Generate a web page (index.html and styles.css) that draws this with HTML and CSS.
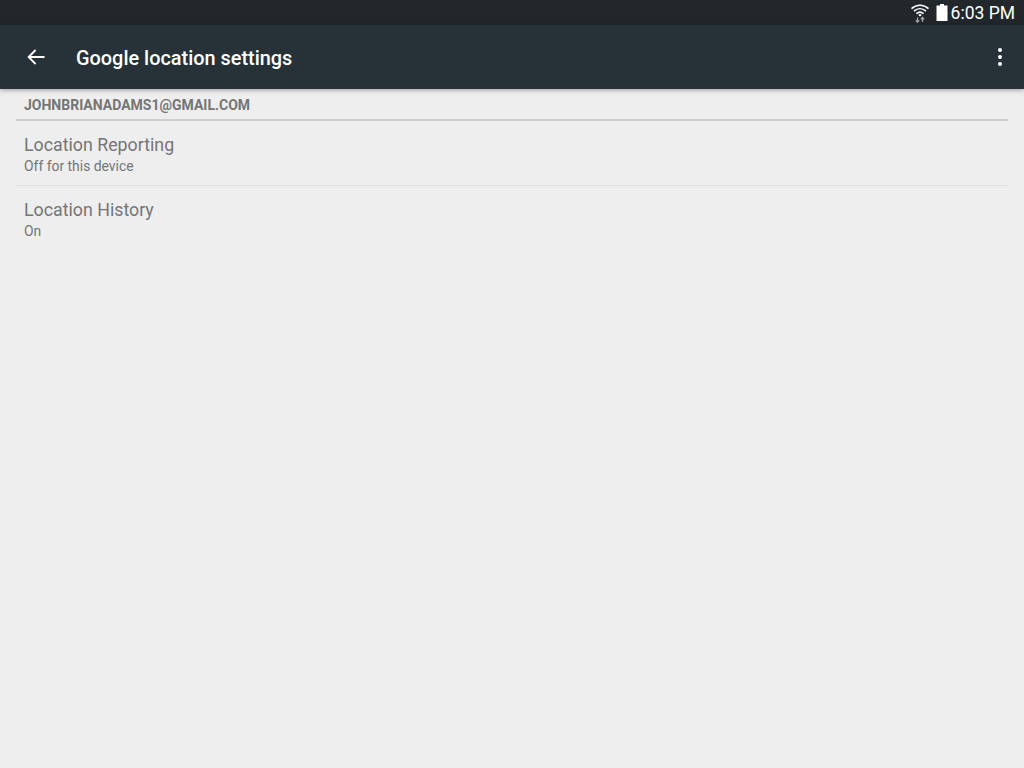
FILE: index.html
```
<!DOCTYPE html>
<html lang="en">
<head>
<meta charset="utf-8">
<title>Google location settings</title>
<link rel="stylesheet" href="styles.css">
</head>
<body>
<div class="status">
  <svg class="wifi" width="20" height="20" viewBox="0 0 20 20">
    <path d="M1.5 5.6C6.5 1.1 13.5 1.1 18.5 5.6M4 8.2C7.6 5 12.4 5 16 8.2M6.4 10.6C8.6 8.8 11.4 8.8 13.6 10.6" fill="none" stroke="#fff" stroke-width="1.6"/>
    <path d="M8.2 12L10 13.6L11.8 12L10 10.8Z" fill="#fff"/>
    <path d="M7.5 14.5V19M5.8 17.4L7.5 19.2L9.2 17.4M12.5 19V14.5M10.8 16.2L12.5 14.4L14.2 16.2" fill="none" stroke="#a4a8aa" stroke-width="1.3"/>
  </svg>
  <svg class="battery" width="12" height="17" viewBox="0 0 12 17"><path d="M4 0H8V1.5H11.5V17H.5V1.5H4Z" fill="#fff"/></svg>
  <span class="clock">6:03 PM</span>
</div>
<header class="appbar">
  <svg class="back" width="18" height="16" viewBox="0 0 18 16"><path d="M17.5 8H2M8.6 1L1.6 8L8.6 15" fill="none" stroke="#fff" stroke-width="1.8"/></svg>
  <h1 class="title">Google location settings</h1>
  <div class="more"><i></i><i></i><i></i></div>
</header>
<main class="content">
  <div class="section">JOHNBRIANADAMS1@GMAIL.COM</div>
  <div class="row row-first">
    <div class="row-title">Location Reporting</div>
    <div class="row-sub">Off for this device</div>
  </div>
  <div class="row">
    <div class="row-title">Location History</div>
    <div class="row-sub">On</div>
  </div>
</main>
</body>
</html>
```
FILE: styles.css
```
* { box-sizing: border-box; }
html, body { margin: 0; height: 100%; }
body {
  width: 1024px;
  height: 768px;
  overflow: hidden;
  display: flex;
  flex-direction: column;
  background: #eeeeee;
  font-family: Roboto, "Liberation Sans", sans-serif;
}
.status {
  height: 25px;
  flex: none;
  background: #21272b;
  color: #fff;
  display: flex;
  align-items: center;
  justify-content: flex-end;
  padding-right: 9px;
}
.wifi { margin-right: 6px; }
.battery { margin-right: 3px; }
.clock { font-size: 17.5px; line-height: 25px; margin-top: 2px; }
.appbar {
  height: 64px;
  flex: none;
  background: #263238;
  display: flex;
  align-items: center;
  padding: 0 22px 0 27px;
  box-shadow: 0 1px 5px rgba(0,0,0,.35);
  position: relative;
}
.back { flex: none; margin-top: -1px; }
.title {
  margin: 3px 0 0 31px;
  flex: 1;
  color: #fff;
  font-size: 19.9px;
  font-weight: 500;
  line-height: 28px;
}
.more { display: flex; flex-direction: column; gap: 2.6px; }
.more i { width: 4px; height: 4px; border-radius: 50%; background: #fff; display: block; }
.content { padding: 0 16px; }
.section {
  height: 32px;
  padding: 8px 8px 0;
  border-bottom: 2px solid #cfcfcf;
  color: #757575;
  font-size: 14px;
  font-weight: 700;
  line-height: 16px;
}
.row { height: 65px; padding: 13px 8px 0; border-bottom: 1px solid #dfdfdf; }
.row:last-child { border-bottom: 0; }
.row-title { color: #757575; font-size: 17.8px; line-height: 22px; }
.row-sub { color: #757575; font-size: 13.9px; line-height: 20px; }
```
